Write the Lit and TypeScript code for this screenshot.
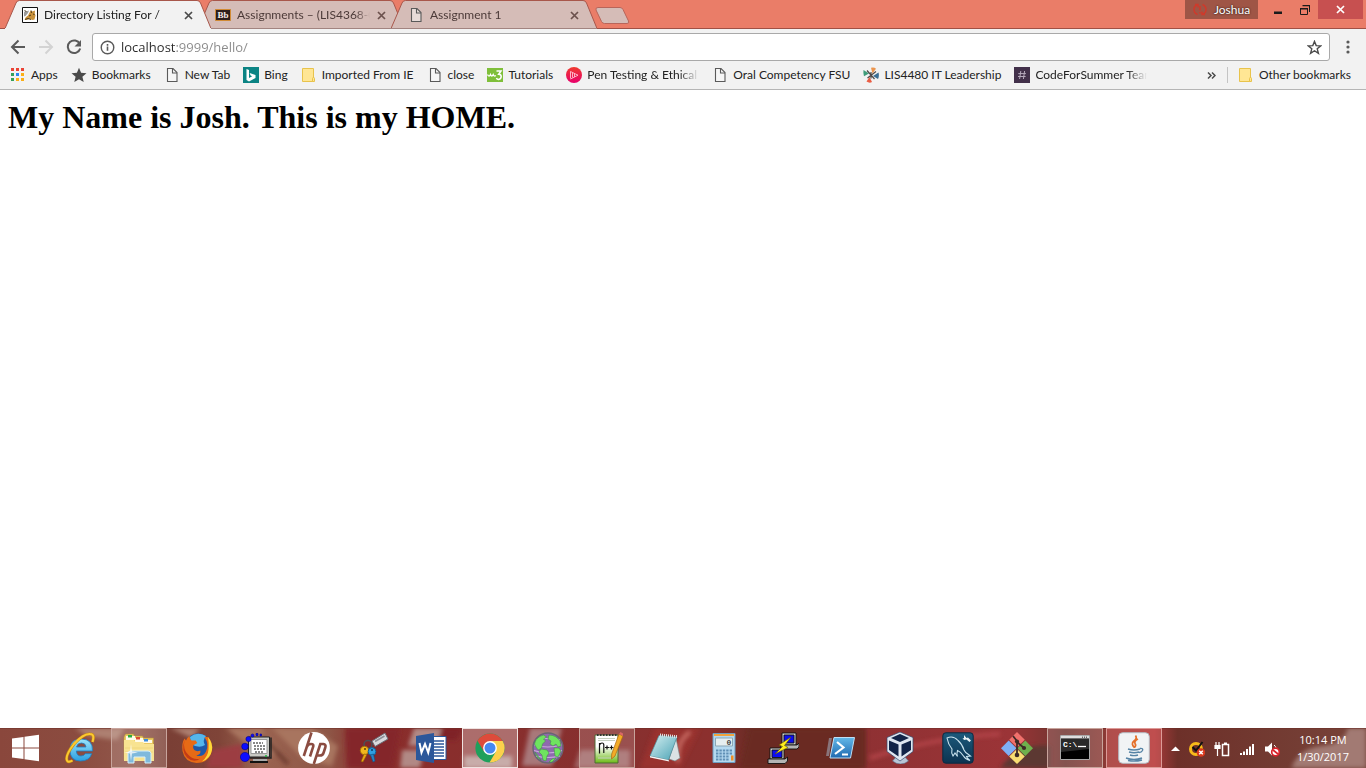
import { LitElement, html, svg, css } from 'lit';
import type { TemplateResult, SVGTemplateResult } from 'lit';
import { customElement } from 'lit/decorators.js';
import { classMap } from 'lit/directives/class-map.js';

const icon = (size: number, body: SVGTemplateResult, box = size) =>
  html`<svg width=${size} height=${size} viewBox="0 0 ${box} ${box}" aria-hidden="true">${body}</svg>`;

/* ---------- small icons ---------- */

const page = icon(16, svg`<path d="M3.5 1.5h5.500l4 4v9H3.500z" fill="#fafafa" fill-opacity=".5" stroke="#5a5a5a" stroke-width="1.100"/><path d="M8.500 1.500v4.500h4.500" fill="none" stroke="#5a5a5a" stroke-width="1.100"/>`);

const folder = icon(16, svg`<path d="M1.5 1.5h11v13h-11z" fill="#ffe694" stroke="#e8c34c"/><path d="M11.5 14.5v-3q0-1 1-1t1 1v3z" fill="#ffe694" stroke="#e8c34c"/>`);

const tomcat = icon(16, svg`<path d="M.5.5h15v15H.5z" fill="#fff" stroke="#111"/>
  <path d="M6 8.500l1.500-3L9 3.500l1.500 1 2.500-1-.2 3 .7 2-1 4-2 .5-3-1-3 1-2-.5L4 10z" fill="#c9923c"/>
  <path d="M2 5.500l1-1.500 1.500.5L7 3.500l-1 2.500-2.500 3L2 9.500z" fill="#9a9a9a"/>
  <path d="M3 12.500l3-1 3 1M9 3.500l.5 2.500M11 7l1.500.5M7 9l2-1M2.500 3.500l2 1" stroke="#46351a" stroke-width=".9" fill="none"/>`);

const blackboard = icon(16, svg`<path d="M.5 2.500h15v11H.5z" fill="#2d1d1c" stroke="#d18a34"/>
  <text x="8" y="11.300" text-anchor="middle" class="glyph-serif" font-size="9" fill="#f6ecea">Bb</text>`);

const appsGrid = html`<svg width="16" height="16" viewBox="0 0 16 16" aria-hidden="true">
  <path d="M1 1h3v3H1zM6 1h3v3H6zM11 1h3v3h-3z" fill="#ea4335"/>
  <path d="M1 6h3v3H1z" fill="#34a05a"/><path d="M6 6h3v3H6z" fill="#2b86f0"/><path d="M11 6h3v3h-3z" fill="#fbaf17"/>
  <path d="M1 11h3v3H1z" fill="#34a05a"/><path d="M6 11h3v3H6zM11 11h3v3h-3z" fill="#fbaf17"/></svg>`;

const star = icon(16, svg`<path d="M8 .8l2.100 5 5.400.4-4.100 3.500 1.300 5.300L8 12.200l-4.700 2.800 1.300-5.300L.5 6.200l5.400-.4z" fill="#4a4a4a"/>`);

const bing = icon(16, svg`<path d="M0 0h16v16H0z" fill="#0c8484"/><path d="M3.500 2l2.500.9v8.200l3.200-1.900-1.600-.8-1-2.400 5.900 2.100v2.800L6 14.500 3.500 13z" fill="#fff"/>`);

const w3 = icon(16, svg`<path d="M0 1h16v14H0z" fill="#7fbf3a"/><path d="M.5 7.500q1.700 3 3 0 1.200 3 2.700 0 1 2.500 2.600 1" fill="none" stroke="#fff" stroke-width="1.300"/><path d="M9.500 4h4.500L11.700 7.200q2.500 0 2.500 2.400T11.600 12.500q-1.600 0-2.200-1.500" fill="none" stroke="#fff" stroke-width="1.500"/>`);

const pen = icon(16, svg`<defs><linearGradient id="pen" x1="0" y1="0" x2="0" y2="1"><stop offset="0" stop-color="#ef3b2e"/><stop offset="1" stop-color="#e8006c"/></linearGradient></defs><circle cx="8" cy="8" r="8" fill="url(#pen)"/><path d="M4.500 4.500V11.500M4.500 4.500L12 8.200 4.500 12M6.500 6v4.500M8.500 6.500v3.500" fill="none" stroke="#ffc2d2" stroke-width=".9"/>`);

const pinwheel = icon(16, svg`
  <path d="M8 .8q3-1 5 1L9.500 6.500z" fill="#eb954e"/><path d="M.5 3l5.500 3.500-5 2.800q-1-3-.5-6.300z" fill="#3f9c7a"/>
  <path d="M15.500 5.500q1 3.500-.5 6.500L10 9z" fill="#3a6f95"/><path d="M3.500 14.500L6.500 10l2.500 5q-2.500 1.500-5.500-.5z" fill="#ea5d43"/>
  <path d="M4 3.500l7.500 8.500M13 4.500L4.500 11M8 5v6.500" stroke="#4e4a48" stroke-width="1.200"/>`);

const hash = icon(16, svg`<path d="M0 0h16v16H0z" fill="#42304a"/><path d="M6.800 4l-1.200 8M10.600 4l-1.200 8M4.300 6.600h7.600M4 9.500h7.600" stroke="#b5a9bb" stroke-width="1"/>`);

const closeX = icon(9, svg`<path d="M1 1l7 7M8 1L1 8" stroke="currentColor" stroke-width="1.700"/>`);

/* ---------- task bar icons ---------- */

const windowsLogo = icon(28, svg`<path d="M0 4.500l11.500-1.500v10.500H0zM12.500 2.800L27 .8v12.700H12.500zM0 14.500h11.500V25L0 23.500zM12.500 14.500H27v12.700l-14.500-2z" fill="#fff"/>`);

const ie = icon(32, svg`<defs><linearGradient id="ie" x1="0" y1="0" x2="0" y2="1"><stop offset="0" stop-color="#9be4fb"/><stop offset="1" stop-color="#2b9fe0"/></linearGradient></defs>
  <path d="M28.500 19H12.300q.4 5 4.700 5 3 0 4.200-2.300h6.500Q25.500 29 16.500 29 6 29 6 18 6 7 17 7q12 0 11.500 12zM22 15q-.4-4-4.500-4-4.200 0-5 4z" fill="url(#ie)" stroke="#1c7fc4" stroke-width=".8"/>
  <path d="M28.500 10Q31 2 26 2 19.500 1.500 10 12 1 23.500 3 28.500 4 31 8.500 28.500" fill="none" stroke="#c98b10" stroke-width="3"/>
  <path d="M28.500 10Q31 2 26 2 19.500 1.500 10 12 1 23.500 3 28.500 4 31 8.500 28.500" fill="none" stroke="#fbc932" stroke-width="2"/>`);

const explorer = icon(32, svg`
  <path d="M1 5l1.500-3h8l1 2h8l1 2h10v22H1z" fill="#e9c860" stroke="#b7923a" stroke-width=".6"/>
  <path d="M3 4h9v4H3zM12 6h8v4h-8zM20 8h9v3h-9z" fill="#fffbe9"/><path d="M5 3h4v2.500H5z" fill="#2bab3f"/><path d="M13 5h4v2.500h-4z" fill="#dd4b33"/><path d="M21 7h4v2.500h-4z" fill="#3a8de0"/>
  <path d="M1 8h10l1.500 2H20l1.500 2H31v17H1z" fill="#f8e391"/><path d="M2 16h28M2 20h28" stroke="#efd67c"/>
  <path d="M5 31v-9.500q0-2.500 3-2.500h17q3 0 3 2.500V31h-6v-6H11v6z" fill="#7fb9dc" stroke="#d6f0fc"/>
  <path d="M8 12l1 7.500 6 1-6 1L8 29l-1-7.500-6-1 6-1z" fill="#fff" opacity=".75"/>`);

const firefox = icon(32, svg`<circle cx="17" cy="14.500" r="13" fill="#1f58a8"/><path d="M9 5Q16-1 25 4q-4 4-1 9-6 4-14-1z" fill="#55b6ec"/>
  <path d="M27 5q5 6 4 13Q28.500 31 15.500 31 3.500 30 1.500 19 .5 11 3.500 6.500L5 8.500q1-3 3.500-4.500.2 3 2 4.500h4.200l1.600 2.500-4 2.300q-.8 2.700 1 4.700 2.600 2 6 .5 1 4-4 5 6.700 2 9.700-4 3.500-7-1.500-14.500z" fill="#e66a16"/>
  <path d="M27 5q5 6 4 13Q29.500 26.500 21 29.500q6-5 6.500-12Q28 10 27 5z" fill="#fdd938"/><path d="M3.500 8q-2 10 4 15 5 5.500 12 3.500-7 5-13.500-1Q0 19 3.500 8z" fill="#c33b16"/>`);

const screenDots = icon(32, svg`
  <path d="M8.500 5h21v20h-21z" fill="#c9c9c3" stroke="#222"/><path d="M11 7.500h16v14H11z" fill="#fff" stroke="#999"/>
  <path d="M31 5.500v20.500H10" fill="none" stroke="#222" stroke-width="1.500"/><path d="M13 27h14v2H13z" fill="#aaa"/><path d="M10 30h18" stroke="#111" stroke-width="2"/>
  <path d="M13 11h10M14 14h11M14 17h11M15 20h9" stroke="#111" stroke-dasharray="2 1"/><path d="M25 24h2" stroke="#1bb53c" stroke-width="1.500"/>
  <g fill="#0d0dff" stroke="#00008f" stroke-width=".6"><circle cx="5" cy="25" r="4.600"/><circle cx="5" cy="14.500" r="3.300"/><circle cx="8.500" cy="7" r="2.600"/><circle cx="12.500" cy="3.500" r="1.500"/><path d="M16 1.500h2v2h-2zM20 2h1.500v2H20z"/></g>`);

const hp = icon(32, svg`<circle cx="16" cy="16" r="15.900" fill="#fff"/>
  <path d="M13.500.5L5.800 24M8.800 15q1-3 4.200-3t2 3.200L12 24.500M15.800 32l6.500-20h3q3 .3 2 3.500l-1.800 5.500q-.8 2.500-3.500 2.500h-3" fill="none" stroke="#8b4c41" stroke-width="2.600"/>`);

const keys = icon(32, svg`
  <path d="M15 9L28 1l3 6-13 7.500z" fill="#d9dade" stroke="#6b6e77"/><path d="M18 9.500l9.500-5.500" stroke="#8d9098" stroke-width="1.500"/>
  <circle cx="11" cy="12.500" r="4" fill="none" stroke="#49505a" stroke-width="1.500"/>
  <circle cx="7.500" cy="18.500" r="4.200" fill="#f2b61d" stroke="#a86e07"/><path d="M7 22l-3 7.500 2 .5 4-7.500z" fill="#eaa512" stroke="#8a5806" stroke-width=".6"/>
  <circle cx="15" cy="19.500" r="3.900" fill="#2f9fe0" stroke="#155c92"/><path d="M13.500 23l2.500 7 2-1-1.500-7z" fill="#2684c4" stroke="#114e80" stroke-width=".6"/>
  <circle cx="8" cy="17" r="1" fill="#5b3c0b"/><circle cx="15" cy="18" r="1" fill="#0c3c66"/>`);

const word = icon(32, svg`<path d="M16 4.500h15v23H16z" fill="#fff" stroke="#2b579a"/>
  <path d="M19 9h10M19 12h10M19 15h10M19 18h10M19 21h10M19 24h10" stroke="#2b579a" stroke-width="1.300"/>
  <path d="M1 4L19 1v30L1 28z" fill="#2b579a"/><path d="M4.500 11l2 9.500L10 12l3.200 8.500 2.300-9.500" fill="none" stroke="#fff" stroke-width="2"/>`);

const chrome = icon(32, svg`<circle cx="16" cy="16" r="14.600" fill="#1fa05c"/>
  <path d="M28.700 9A14.600 14.600 0 0 1 15.500 30.600L22 19.500 16 9z" fill="#fcd04c"/>
  <path d="M3.400 8.700L10 19.500l6-3.500V9h12.700Q24 1.200 16 1.400 8 1.500 3.400 8.700z" fill="#dd4b3b"/>
  <circle cx="16" cy="16" r="6.900" fill="#fff"/><circle cx="16" cy="16" r="5.500" fill="#4688f1"/>`);

const globe = icon(32, svg`<circle cx="16" cy="16" r="15" fill="#8f6aae" stroke="#6a6473" stroke-width="1.500"/>
  <path d="M4 8q8-3 24 0M2.500 13q13 4 27 0M2 18.500q14 5 28 0M4 24q12 3 24 0" fill="none" stroke="#c9a8de" stroke-width="1.100"/>
  <path d="M2.500 12q1.500-7 9-9l3 2-3 2 2 2-3 3-1 4-3 2-2-2zM17 3q7 0 11 6l1 5-3 1-2-3-3 2-3-2 1-3-3-2zM9 17l6 1 2 3-2 3-1 5-3-1-1-5-3-3zM22 16l5 0 2 3-3 6-3-1zM3 20l3 4 3 4q-5-3-6-8zM20 27l4-1-4 4h-3z" fill="#6fe35f" stroke="#3c8a44" stroke-width=".5"/>`);

const npp = icon(32, svg`<defs><linearGradient id="npp" x1="0" y1="0" x2="0" y2="1"><stop offset=".4" stop-color="#fff"/><stop offset="1" stop-color="#6cba15"/></linearGradient></defs>
  <path d="M4 3h23v28H4z" fill="url(#npp)" stroke="#4f6a35"/><path d="M6 3h20" stroke="#333" stroke-width="2" stroke-dasharray="1.500 1.500"/>
  <path d="M7 6.500h17M7 8.500h17M7 26h14" stroke="#c5cfc0"/>
  <path d="M8.500 21.500V11M8.500 13q1-2 2.500-2 1.800 0 1.800 2v8M14 15.500h4M16 13.500v4M18.500 15.500h4M20.500 13.500v4" fill="none" stroke="#111" stroke-width="1.200"/>
  <path d="M28 2l4 2-8 20-3.500 3 .2-5z" fill="#f3ab26" stroke="#a76611" stroke-width=".7"/><path d="M28 2l4 2 0-2.500L29.500 0z" fill="#d96767"/>`);

const notepad = icon(32, svg`<defs><linearGradient id="np" x1="0" y1="0" x2="1" y2="1"><stop offset="0" stop-color="#d7f0f2"/><stop offset="1" stop-color="#4aa3b5"/></linearGradient></defs>
  <path d="M27 6l4 20-5 3L20 27z" fill="#dbe2e4" stroke="#76868a" stroke-width=".6"/>
  <path d="M10 3.500l18 1.500-8.500 23L1 24z" fill="url(#np)" stroke="#4f8f9c" stroke-width=".7"/><path d="M1 24l18.500 4 .8 1.500L1 25.500z" fill="#f3f7f7"/>
  <path d="M11 3l17 1.700" stroke="#e5e5e5" stroke-width="3" stroke-dasharray="1 1"/>`);

const calculator = icon(32, svg`<path d="M5 1.500h22v29H5z" fill="#b5d9f0" stroke="#6d9dc1"/><path d="M6 2h20v2H6z" fill="#f3a33b"/>
  <path d="M7.500 6h17v8h-17z" fill="#e6eef0" stroke="#8ba7b5"/><text x="21" y="13" text-anchor="middle" class="glyph-mono" font-size="8" fill="#444">0</text>
  <path d="M8 18.500h17M8 21.500h17M8 24.500h13M8 27.500h13" stroke="#5f8fb5" stroke-width="2" stroke-dasharray="2.400 1"/><path d="M23 23.500h2.500v5H23z" fill="#f08f26"/>`);

const putty = icon(32, svg`<g stroke="#111" stroke-width=".9">
  <path d="M15 1h14v12H15z" fill="#cfcfcf"/><path d="M17 3h10v8H17z" fill="#0d0df0"/><path d="M14 13h16l2-2v4l-2 2H14z" fill="#b4b4b4"/>
  <path d="M3 16h14v11H3z" fill="#cfcfcf"/><path d="M5 18h10v7.500H5z" fill="#0d0df0"/><path d="M1 27h17l2.500-2v4L18 31.500H1z" fill="#b4b4b4"/></g>
  <path d="M24 5L12 13l3.500 1.500L8 22l13-6.500-3.500-2z" fill="#ffee1c" stroke="#5f5500" stroke-width=".6"/>`);

const powershell = icon(32, svg`<defs><linearGradient id="ps" x1="0" y1="0" x2="0" y2="1"><stop offset="0" stop-color="#62b8e8"/><stop offset="1" stop-color="#1f69b0"/></linearGradient></defs>
  <path d="M4 6h3L4 24H1z" fill="#a8bdd4" opacity=".5"/><path d="M9 5.500H29.500L25.500 26H5z" fill="url(#ps)" stroke="#bfe0f5" stroke-linejoin="round"/>
  <path d="M12 10l6.500 5.500L10 22M17 22.500h6" fill="none" stroke="#fff" stroke-width="2.200"/>`);

const vbox = icon(32, svg`<path d="M12 25h9l3.500 4q-3.500 3-8 3t-8-3z" fill="#b9c7d8" stroke="#5a6c86" stroke-width=".6"/>
  <path d="M16 0l13 5.500v14L16 29 3 19.500v-14z" fill="#dfe7f1" stroke="#34476b" stroke-width=".7"/>
  <path d="M16 2l9 4-9 4-9-4zM5 8.500l9.500 4v12L5 18zM27 8.500l-9.500 4v12L27 18z" fill="#122448"/>`);

const mysql = icon(32, svg`<defs><linearGradient id="my" x1="0" y1="0" x2="0" y2="1"><stop offset="0" stop-color="#1c5a7c"/><stop offset="1" stop-color="#0c3350"/></linearGradient></defs>
  <rect x=".8" y=".8" width="30.400" height="30.400" rx="3" fill="url(#my)" stroke="#0a2a42"/>
  <path d="M5 6q6-3 11 2.500 4.500 4 6 9.500 1 2.500 4.500 4.500l2 1.500-4 .5q1 2.500 3.500 4-4.500-1-6.500-4.500-3-4.500-6-5.500-1 3 0 6l-2.500-3.500-2 3q-2-3-1-7Q6 12 5 6z" fill="none" stroke="#c9e3ee" stroke-width="1.100"/>
  <path d="M22 3l2.500 3 1.500-.5 3 3-1.500 1.500-3-2.500-2.500.5-1.500-2 1.500.2z" fill="#e8f1f5"/>`);

const git = icon(32, svg`<path d="M16 0l7.800 7.800L16 15.600 8.200 7.800z" fill="#f0716c"/><path d="M24.300 8.500l7.700 7.700-7.700 7.700-7.800-7.700z" fill="#6fb04d"/>
  <path d="M7.700 8.500l7.800 7.700-7.800 7.700L0 16.200z" fill="#7fb0f5"/><path d="M16 17l7.800 7.500L16 32l-7.800-7.500z" fill="#f8dd72"/>
  <path d="M12 4l4 5v14M16 10l7 6" fill="none" stroke="#3d2a26" stroke-width="1.800"/><g fill="#3d2a26"><circle cx="16" cy="9.500" r="2.100"/><circle cx="16" cy="23" r="2.300"/><circle cx="23" cy="16" r="2.100"/></g>`);

const cmd = icon(32, svg`<path d="M1.500 3.500h29v24h-29z" fill="#000" stroke="#a9a9a9"/><path d="M2 4h28v2.500H2z" fill="#dfdfdf"/><path d="M23 5.200h6" stroke="#333" stroke-dasharray="1 1"/>
  <path d="M2 7h28v10L2 20z" fill="#444" opacity=".6"/>
  <text x="4" y="15" class="glyph-mono" font-size="8" fill="#fff">C:\\</text><path d="M19 14.500h8" stroke="#fff" stroke-width="1.300"/>`);

const java = icon(32, svg`<rect x=".7" y=".7" width="30.600" height="30.600" rx="4" fill="#f1f3f5" stroke="#b4bbc2"/>
  <path d="M17.500 3.500q2 3-1.500 5.500-3.500 3 .5 6.500M20 7q-4 2-3 4.500 1.500 2-.5 4" fill="none" stroke="#e5702b" stroke-width="1.700"/>
  <path d="M10 17q6 2 12 0M22 16.500q3.500-.5 2.500 2-1 1.800-3.500 2M11 20q5 1.500 10 0M12 23q4 1.200 8 0M8 26q8 3 16 0M10 28.500q7 1.500 14-.5" fill="none" stroke="#5683a5" stroke-width="1.400"/>`);

/* ---------- data ---------- */

interface Tab { title: string; icon: TemplateResult; active?: boolean }
const tabs: Tab[] = [
  { title: 'Directory Listing For /', icon: tomcat, active: true },
  { title: 'Assignments – (LIS4368-0', icon: blackboard },
  { title: 'Assignment 1', icon: page },
];

interface Bookmark { title: string; icon: TemplateResult; long?: boolean }
const bookmarks: Bookmark[] = [
  { title: 'Apps', icon: appsGrid },
  { title: 'Bookmarks', icon: star },
  { title: 'New Tab', icon: page },
  { title: 'Bing', icon: bing },
  { title: 'Imported From IE', icon: folder },
  { title: 'close', icon: page },
  { title: 'Tutorials', icon: w3 },
  { title: 'Pen Testing & Ethical', icon: pen, long: true },
  { title: 'Oral Competency FSU', icon: page },
  { title: 'LIS4480 IT Leadership', icon: pinwheel },
  { title: 'CodeForSummer Team', icon: hash, long: true },
];

interface Task { name: string; icon: TemplateResult; state?: 'open' | 'front' | 'alert' }
const tasks: Task[] = [
  { name: 'Internet Explorer', icon: ie },
  { name: 'File Explorer', icon: explorer, state: 'open' },
  { name: 'Firefox', icon: firefox },
  { name: 'Remote screen', icon: screenDots },
  { name: 'HP Support', icon: hp },
  { name: 'Passwords', icon: keys },
  { name: 'Word', icon: word },
  { name: 'Chrome', icon: chrome, state: 'front' },
  { name: 'Globe', icon: globe },
  { name: 'Notepad++', icon: npp, state: 'open' },
  { name: 'Notepad', icon: notepad },
  { name: 'Calculator', icon: calculator },
  { name: 'PuTTY', icon: putty },
  { name: 'PowerShell', icon: powershell },
  { name: 'VirtualBox', icon: vbox },
  { name: 'MySQL Workbench', icon: mysql },
  { name: 'Git', icon: git },
  { name: 'Command Prompt', icon: cmd, state: 'open' },
  { name: 'Java', icon: java, state: 'alert' },
];

const controls = css`
  :host { display: block; font: 12px/16px Lato, "Open Sans", sans-serif; color: #222; }
  * { box-sizing: border-box; }
  svg { display: block; flex: none; }
  button { display: flex; align-items: center; justify-content: center; margin: 0; padding: 0; border: 0; background: none; font: inherit; color: inherit; }
  a { color: inherit; text-decoration: none; }
  .glyph-serif { font-family: "Liberation Serif", serif; font-weight: bold; }
  .glyph-mono { font-family: "Liberation Mono", monospace; font-weight: bold; }
`;

@customElement('tab-strip')
class TabStrip extends LitElement {
  static styles = [controls, css`
    .strip { display: flex; align-items: flex-start; height: 29px; padding-left: 5px; background: linear-gradient(#ea7d68 28px, #a05045 28px); }
    .tabs { display: flex; }
    .tab { display: grid; width: 206px; height: 29px; margin-right: -13px; }
    .tab > * { grid-area: 1 / 1; }
    .active { z-index: 1; }
    .shape { width: 100%; height: 29px; }
    .content { display: flex; align-items: center; gap: 6px; min-width: 0; padding: 1px 17px 0 17px; color: #6c514d; }
    .active .content { color: #4a4a4a; }
    .title { flex: 1; overflow: hidden; white-space: nowrap; color: #4c3a38; mask-image: linear-gradient(90deg, #000 calc(100% - 14px), transparent); }
    .active .title { color: #222; }
    .close { width: 11px; height: 16px; }
    .new { margin: 7px 0 0 11px; }
    .window { display: flex; align-items: flex-start; margin-left: auto; padding-right: 3px; }
    .profile { gap: 7px; width: 73px; height: 19px; background: #9f5546; color: #fff; text-shadow: 0 0 2px #000; }
    .caption { width: 30px; height: 19px; color: #222; }
    .caption.last { width: 24px; }
    .caption.quit { width: 45px; margin-left: 1px; background: #c75050; color: #fff; }
    .first { margin-left: 5px; }
  `];
  render() {
    return html`<header class="strip">
      <nav class="tabs" aria-label="Tabs">
        ${tabs.map(t => html`<div class=${classMap({ tab: true, active: !!t.active })}>
          <svg class="shape" viewBox="0 0 206 29" preserveAspectRatio="none" aria-hidden="true">
            <path d="M0 28.500L11 3Q12 .5 14.500 .5H192Q194.500 .5 195.500 3L206 28.500" fill=${t.active ? '#f2f2f2' : '#d5bcb7'} stroke="#a8574b"/>
            <path d="M0 28.500H206" stroke=${t.active ? '#f2f2f2' : '#a28480'}/>
          </svg>
          <div class="content">${t.icon}<span class="title">${t.title}</span><button class="close" aria-label="Close tab">${closeX}</button></div>
        </div>`)}
      </nav>
      <button class="new" aria-label="New tab">
        <svg width="36" height="18" viewBox="0 0 36 18" aria-hidden="true"><path d="M3 .5H25Q27 .5 28 2.500L33.500 14Q34.500 16.500 32 16.500H9.500Q7.500 16.500 6.500 14.500L1 3Q.3 .5 3 .5z" fill="#d5bcb7" stroke="#b8655a"/></svg>
      </button>
      <div class="window">
        <button class="profile">
          <svg width="14" height="13" viewBox="0 0 14 13" aria-hidden="true"><path d="M4.500 1.500Q1 3 1 6.500T4.500 11.500M9.500 1.500Q13 3 13 6.500T9.500 11.500M2 1.500h3v3M12 11.500H9v-3" fill="none" stroke="#cf3a2b" stroke-width="1.500"/><path d="M7 3v4.500M7 9v1.500" stroke="#cf3a2b" stroke-width="1.600"/></svg>
          <span>Joshua</span>
        </button>
        <button class="caption first" aria-label="Minimize"><svg width="8" height="8" viewBox="0 0 8 8"><path d="M0 5.500h8V8H0z" fill="#1b1b1b"/></svg></button>
        <button class="caption last" aria-label="Restore"><svg width="10" height="10" viewBox="0 0 10 10"><path d="M.5 3.500h7v6h-7z" fill="none" stroke="#1b1b1b"/><path d="M0 3h8v1.500H0zM2.500 0H10v7H9V1.200H2.500z" fill="#1b1b1b"/></svg></button>
        <button class="caption quit" aria-label="Close">${icon(9, svg`<path d="M1 1l7 7M8 1L1 8" stroke="#fff" stroke-width="1.700"/>`)}</button>
      </div>
    </header>`;
  }
}

@customElement('nav-toolbar')
class NavToolbar extends LitElement {
  static styles = [controls, css`
    .bar { display: flex; align-items: center; height: 36px; padding: 0 8px; background: #f2f2f2; }
    .nav { width: 20px; height: 24px; margin-right: 8px; }
    .box { flex: 1; display: flex; align-items: center; gap: 6px; height: 28px; padding: 0 7px; border: 1px solid #a9a9a9; border-radius: 3px; background: #fff; }
    .url { flex: 1; min-width: 0; height: 24px; padding: 0; border: 0; outline: 0; font: 13px/24px "Open Sans", sans-serif; color: transparent; background: linear-gradient(90deg, #2a2a2a 54px, #8a8a8a 54px); background-clip: text; -webkit-background-clip: text; }
    .menu { width: 20px; height: 24px; margin-left: 8px; }
  `];
  render() {
    return html`<div class="bar">
      <button class="nav" aria-label="Back">${icon(16, svg`<path d="M15 8H2M8.500 1.500L2 8l6.500 6.500" fill="none" stroke="#5a5a5a" stroke-width="2"/>`)}</button>
      <button class="nav" aria-label="Forward" disabled>${icon(16, svg`<path d="M1 8h13M7.500 1.500L14 8l-6.500 6.500" fill="none" stroke="#d3d3d3" stroke-width="2"/>`)}</button>
      <button class="nav" aria-label="Reload">${icon(16, svg`<path d="M13.800 5A6.300 6.300 0 1 0 14.200 9.500" fill="none" stroke="#5a5a5a" stroke-width="2"/><path d="M15 1v6.500H8.500z" fill="#5a5a5a"/>`)}</button>
      <label class="box">
        ${icon(15, svg`<circle cx="8" cy="8" r="6.700" fill="none" stroke="#5a5a5a" stroke-width="1.500"/><path d="M8 7v4.500M8 4.300V6" stroke="#5a5a5a" stroke-width="1.700"/>`, 16)}
        <input class="url" aria-label="Address" value="localhost:9999/hello/" spellcheck="false">
        <button aria-label="Bookmark this page">${icon(15, svg`<path d="M8 1.500l1.800 4.500 4.900.3-3.800 3.100 1.300 4.800L8 11.500l-4.200 2.700 1.300-4.800L1.300 6.300 6.200 6z" fill="none" stroke="#4a4a4a" stroke-width="1.500"/>`, 16)}</button>
      </label>
      <button class="menu" aria-label="Menu">${icon(16, svg`<circle cx="8" cy="3" r="1.600" fill="#5a5a5a"/><circle cx="8" cy="8" r="1.600" fill="#5a5a5a"/><circle cx="8" cy="13" r="1.600" fill="#5a5a5a"/>`)}</button>
    </div>`;
  }
}

@customElement('bookmarks-bar')
class BookmarksBar extends LitElement {
  static styles = [controls, css`
    .bar { display: flex; align-items: center; height: 25px; padding: 0 15px 4px 10px; border-bottom: 1px solid #b5b5b5; background: #f2f2f2; }
    .item { display: flex; align-items: center; gap: 5px; margin-right: 13px; white-space: nowrap; }
    .long { width: 112px; overflow: hidden; mask-image: linear-gradient(90deg, #000 calc(100% - 20px), transparent); }
    .more { margin-left: auto; width: 10px; height: 16px; }
    .rule { width: 1px; height: 16px; margin: 0 10px; background: #c4c4c4; }
    .other { margin-right: 0; }
  `];
  render() {
    return html`<nav class="bar" aria-label="Bookmarks">
      ${bookmarks.map(b => html`<a class="item" href="#">${b.icon}<span class=${classMap({ long: !!b.long })}>${b.title}</span></a>`)}
      <button class="more" aria-label="More bookmarks">${icon(9, svg`<path d="M1 1.500l3 3-3 3M5 1.500l3 3-3 3" fill="none" stroke="#4a4a4a" stroke-width="1.500"/>`)}</button>
      <span class="rule"></span>
      <a class="item other" href="#">${folder}<span>Other bookmarks</span></a>
    </nav>`;
  }
}

@customElement('task-bar')
class TaskBar extends LitElement {
  static styles = [controls, css`
    .bar { display: grid; height: 40px; overflow: hidden; color: #fff; }
    .bar > * { grid-area: 1 / 1; }
    .wallpaper { width: 100%; height: 40px; }
    .row { display: flex; z-index: 1; min-width: 0; }
    .start { width: 52px; height: 40px; }
    .tasks { flex: 1; display: flex; justify-content: space-between; min-width: 0; }
    .task { width: 56px; height: 40px; border: 1px solid transparent; }
    .open { border-color: #c8a49c; background: #ffffff28; }
    .front { border-color: #efe2e0; background: #ffffff4d; }
    .alert { border-color: #dd9b98; background: #e8707060; }
    .tray { display: flex; align-items: center; gap: 9px; width: 204px; padding: 0 17px 0 9px; }
    .tray svg { margin-top: 2px; }
    .clock { margin-left: auto; font: 11px/17px "Open Sans", sans-serif; text-align: center; }
    .clock span { display: block; }
  `];
  render() {
    return html`<footer class="bar">
      <svg class="wallpaper" viewBox="0 0 1366 40" preserveAspectRatio="none" aria-hidden="true">
        <defs>
          <linearGradient id="wall">
            <stop offset="0" stop-color="#8a473c"/><stop offset=".06" stop-color="#8b4c40"/><stop offset=".1" stop-color="#92594c"/>
            <stop offset=".125" stop-color="#7a3f35"/><stop offset=".16" stop-color="#7f4438"/><stop offset=".19" stop-color="#9a6350"/><stop offset=".24" stop-color="#8e5747"/>
            <stop offset=".27" stop-color="#8a2d2b"/><stop offset=".45" stop-color="#87302f"/><stop offset=".52" stop-color="#8c302e"/><stop offset=".55" stop-color="#6a2c26"/>
            <stop offset=".628" stop-color="#6b2d27"/><stop offset=".635" stop-color="#8f3133"/><stop offset=".74" stop-color="#9b3437"/><stop offset=".78" stop-color="#6f342f"/>
            <stop offset=".81" stop-color="#8c3a36"/><stop offset=".845" stop-color="#a83a3b"/><stop offset=".862" stop-color="#6d3029"/><stop offset="1" stop-color="#78443a"/>
          </linearGradient>
          <filter id="soft" x="-20%" y="-20%" width="140%" height="140%"><feGaussianBlur stdDeviation="2"/></filter>
        </defs>
        <path d="M0 0H1366V40H0z" fill="url(#wall)"/>
        <g filter="url(#soft)">
          <path d="M75 0h50l-8 12-30-4zM170 0h30l-8 10z" fill="#ad8071"/><path d="M212 22l30-6v24h-36z" fill="#9c3c42"/>
          <path d="M226 0h35l18 22-12 10zM272 0h40l26 18-6 20-30-8z" fill="#a8745f"/><path d="M262 8l26 28" stroke="#6c3a2e" stroke-width="4"/>
          <path d="M345 0h55l-8 40h-45z" fill="#84262a"/><path d="M440 0h24l-8 12h-20z" fill="#7f2428"/>
          <path d="M414 0h28l-6 18h-28zM402 22h22l-4 18h-20zM464 28h48v12h-48z" fill="#b18985"/>
          <path d="M530 0h32l-10 38h-30z" fill="#a8787a"/><path d="M580 22h50v18h-56z" fill="#a16868"/>
          <path d="M655 0h45l-20 40h-40z" fill="#99302f"/><path d="M690 4q-14 10-12 30" stroke="#cf7067" stroke-width="3" fill="none"/>
          <path d="M722 30q4-8 2-18" stroke="#b06b60" stroke-width="3" fill="none"/><path d="M750 0h116v40H740z" fill="#6a2a24"/>
          <path d="M870 30q60-20 130-24" stroke="#b34448" stroke-width="4" fill="none"/><path d="M1000 40q20-26 50-22v22z" fill="#5c3731"/>
        </g>
        <path d="M1291 40Q1300 20 1322 18T1348 0H1366V40z" fill="#a27a73" filter="url(#soft)"/>
        <path d="M0 .5H1366" stroke="#6c2f28" opacity=".5"/>
      </svg>
      <div class="row">
        <button class="start" aria-label="Start">${windowsLogo}</button>
        <nav class="tasks" aria-label="Applications">
          ${tasks.map(t => html`<button class=${classMap({ task: true, open: t.state === 'open', front: t.state === 'front', alert: t.state === 'alert' })} aria-label=${t.name}>${t.icon}</button>`)}
        </nav>
        <div class="tray">
          <svg width="9" height="6" viewBox="0 0 9 6" aria-hidden="true"><path d="M0 5L4.500 .5 9 5z" fill="#fff"/></svg>
          ${icon(16, svg`<circle cx="7" cy="8" r="5.500" fill="none" stroke="#f8bb1a" stroke-width="3"/><path d="M3.500 6L7 9.500 13.500 1" fill="none" stroke="#111" stroke-width="2"/><circle cx="12" cy="11.500" r="4.300" fill="#d8381d"/><path d="M10.200 9.700l3.600 3.600M13.800 9.700l-3.600 3.600" stroke="#fff" stroke-width="1.500"/>`)}
          ${icon(16, svg`<path d="M8.500 3.500h6v11h-6z" fill="none" stroke="#fff" stroke-width="1.500"/><path d="M10 1.500h3v2h-3z" fill="#fff"/><path d="M2 1v3M5 1v3M1 4.500h5v3H1zM3.500 7v8" stroke="#fff" stroke-width="1.200" fill="#fff"/>`)}
          ${icon(16, svg`<path d="M1 12h2v2H1zM4 10.500h2V14H4zM7 8h2v6H7zM10 5.500h2V14h-2zM13 3h2v11h-2z" fill="#fff"/>`)}
          ${icon(16, svg`<path d="M1 5.500h3L8 1.500v13L4 10.500H1z" fill="#fff"/><path d="M10 4q1.500 1 2 3" stroke="#fff" fill="none"/><circle cx="11.500" cy="11" r="3.800" fill="#fff" stroke="#d8222a" stroke-width="1.700"/><path d="M9 9l5 4" stroke="#d8222a" stroke-width="1.700"/>`)}
          <time class="clock" datetime="2017-01-30T22:14"><span>10:14 PM</span><span>1/30/2017</span></time>
        </div>
      </div>
    </footer>`;
  }
}

@customElement('app-root')
class AppRoot extends LitElement {
  static styles = css`
    :host { display: flex; flex-direction: column; height: 100vh; overflow: hidden; background: #fff; }
    .page { flex: 1; min-height: 0; padding: 8px; overflow: auto; }
    .heading { margin: 0; font: bold 32px/38px "Liberation Serif", serif; color: #000; }
  `;
  render() {
    return html`
      <tab-strip></tab-strip>
      <nav-toolbar></nav-toolbar>
      <bookmarks-bar></bookmarks-bar>
      <main class="page"><h1 class="heading">My Name is Josh. This is my HOME.</h1></main>
      <task-bar></task-bar>`;
  }
}
